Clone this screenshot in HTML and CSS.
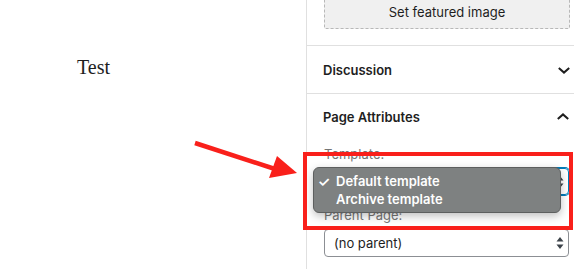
FILE: index.html
```html
<!DOCTYPE html>
<html lang="en">
<head>
    <meta charset="UTF-8">
    <title>Page Attributes</title>
    <link rel="stylesheet" href="styles.css">
</head>
<body>
    <div class="editor">
        <p class="post-content">Test</p>
    </div>

    <aside class="sidebar">
        <div class="panel featured">
            <button class="featured-btn">Set featured image</button>
        </div>

        <div class="panel panel-head">
            <span class="panel-title">Discussion</span>
            <svg class="chevron" viewBox="0 0 24 24" width="24" height="24"><polyline points="6.8,10 12,14.6 17.2,10"/></svg>
        </div>

        <div class="panel attributes">
            <div class="panel-head inner">
                <span class="panel-title">Page Attributes</span>
                <svg class="chevron" viewBox="0 0 24 24" width="24" height="24"><polyline points="6.8,14 12,9.4 17.2,14"/></svg>
            </div>
            <label class="field-label">Template:</label>
            <div class="select focused">
                <span>Default template</span>
                <svg class="updown" viewBox="0 0 8 14" width="8" height="14"><path d="M4 1L7.5 5.5h-7zM4 13L.5 8.5h7z"/></svg>
            </div>
            <label class="field-label">Parent Page:</label>
            <div class="select">
                <span>(no parent)</span>
                <svg class="updown" viewBox="0 0 8 14" width="8" height="14"><path d="M4 1L7.5 5.5h-7zM4 13L.5 8.5h7z"/></svg>
            </div>

            <!-- native dropdown open over the template select -->
            <ul class="dropdown">
                <li class="checked"><span class="check">✓</span>Default template</li>
                <li><span class="check"></span>Archive template</li>
            </ul>
        </div>
    </aside>

    <!-- annotation -->
    <div class="highlight"></div>
    <svg class="arrow" width="120" height="50" viewBox="0 0 120 50">
        <line x1="5" y1="3" x2="88" y2="30" stroke="#f9201b" stroke-width="4.5"/>
        <polygon points="87,16 107,33 79,38" fill="#f9201b"/>
    </svg>
</body>
</html>
```

FILE: styles.css
```css
body {
    margin: 0;
    display: flex;
    width: 574px;
    height: 269px;
    overflow: hidden;
    background: #fff;
    font-family: Inter, "Noto Sans", sans-serif;
    color: #1e1e1e;
    position: relative;
}

.editor {
    width: 306px;
    flex-shrink: 0;
}

.post-content {
    margin: 56px 0 0 77px;
    font-family: "Liberation Serif", serif;
    font-size: 20px;
    color: #1e1e1e;
}

.sidebar {
    flex-grow: 1;
    border-left: 1px solid #e0e0e0;
}

.panel {
    border-bottom: 1px solid #e0e0e0;
    padding: 0 5px 0 16px;
}

.featured {
    padding-bottom: 16px;
}

.featured-btn {
    display: block;
    width: 246px;
    height: 36px;
    margin: -7px 0 0 1px;
    padding-top: 3px;
    background: #f0f0f0;
    border: 1px dashed #b8b8b8;
    border-radius: 2px;
    font-family: inherit;
    font-size: 13px;
    color: #1e1e1e;
}

.panel-head {
    display: flex;
    align-items: center;
    justify-content: space-between;
    height: 47px;
}

.panel-head.inner {
    height: 46px;
}

.panel-title {
    font-size: 13px;
    font-weight: 600;
}

.chevron {
    fill: none;
    stroke: #1e1e1e;
    stroke-width: 2;
    margin-right: -6px;
}

.attributes {
    position: relative;
    border-bottom: none;
    padding-right: 6px;
}

.field-label {
    display: block;
    font-size: 13px;
    line-height: 16px;
    color: #757575;
    margin: 0 0 6px 1px;
}

.inner + .field-label {
    margin-top: 6px;
}

.select {
    display: flex;
    align-items: center;
    justify-content: space-between;
    width: 245px;
    height: 28px;
    box-sizing: border-box;
    margin: 0 0 12px 1px;
    padding: 0 4px 0 9px;
    border: 1px solid #8c8f94;
    border-radius: 4px;
    font-size: 13px;
}

.select.focused {
    height: 27px;
    border-color: #007cba;
    box-shadow: 0 0 0 1px #007cba;
}

.updown {
    fill: #3c434a;
}

.dropdown {
    position: absolute;
    left: 6px;
    top: 73px;
    width: 248px;
    margin: 0;
    padding: 4px 0;
    box-sizing: border-box;
    list-style: none;
    background: #7e8181;
    border: 1px solid #5d5f5f;
    border-radius: 6px;
    box-shadow: 0 3px 8px rgba(0, 0, 0, 0.25);
    color: #fff;
    font-size: 13px;
    font-weight: 600;
}

.dropdown li {
    display: flex;
    align-items: center;
    height: 18px;
}

.check {
    display: inline-block;
    width: 22px;
    text-align: right;
    padding-right: 6px;
    box-sizing: border-box;
    font-size: 14px;
}

/* annotation overlays */
.highlight {
    position: absolute;
    left: 303px;
    top: 152px;
    width: 262px;
    height: 70px;
    border: 4px solid #f9201b;
}

.arrow {
    position: absolute;
    left: 190px;
    top: 140px;
}
```
